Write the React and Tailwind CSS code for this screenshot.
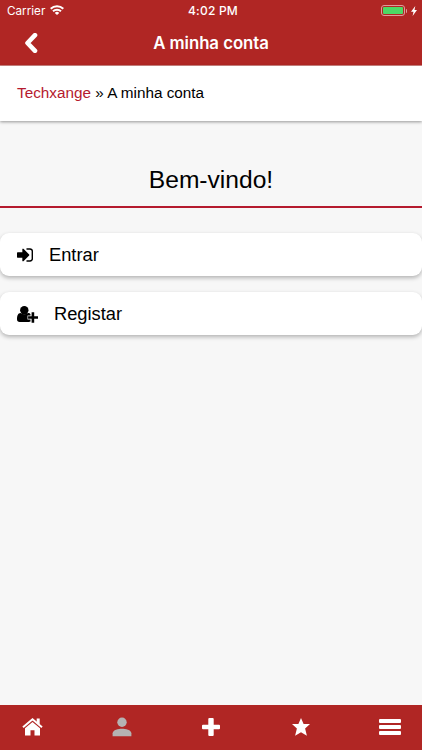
import React from 'react';

const SignInIcon = () => (
  <svg viewBox="0 0 1536 1536" className="w-[16px] h-[16px]" fill="currentColor">
    <path d="M1184 768q0 26-19 45l-544 544q-19 19-45 19t-45-19-19-45v-288H64q-26 0-45-19t-19-45V576q0-26 19-45t45-19h448V224q0-26 19-45t45-19 45 19l544 544q19 19 19 45z" />
    <path d="M960 192h288q92 0 158 62t66 162v704q0 92-62 158t-162 66H960" fill="none" stroke="currentColor" strokeWidth="140" strokeLinecap="round" />
  </svg>
);

const UserPlusIcon = () => (
  <svg viewBox="0 0 21 18" className="w-[21px] h-[18px]" fill="currentColor">
    <circle cx="7.300" cy="5.200" r="4.200" />
    <path d="M3.600 8c2.200 1.700 5.200 1.700 7.400 0 1.300 0 2 .5 2.500 1.200v1.400h-3v4h3v2c-.5.300-1 .4-1.700.4H2.700C1 17 0 15.900 0 14.200 0 11 .9 8 3.600 8z" />
    <path d="M14.600 7.200h2.600v4h3.800v2.600h-3.800v3.900h-2.600v-3.900h-3.500v-2.600h3.500z" />
  </svg>
);

const BackIcon = () => (
  <svg viewBox="0 0 14 20" className="w-[14px] h-[20px]" fill="none" stroke="currentColor" strokeWidth="4.600">
    <path d="M11 2.200L3.500 10l7.500 7.800" strokeLinejoin="round" strokeLinecap="round" />
  </svg>
);

const HomeIcon = () => (
  <svg viewBox="0 0 21 18" className="w-[21px] h-[18px]" fill="currentColor">
    <path d="M3 10.300L10.500 4 18 10.300v7.200h-5.500v-5.200h-4v5.200H3z" />
    <path d="M1 9.300l9.500-8L20 9.300" fill="none" stroke="currentColor" strokeWidth="2" />
    <path d="M14.700 0.500h3v6.500l-3-2.600z" />
  </svg>
);

const StatusBar = () => (
  <div className="grid grid-cols-3 items-center h-[22px] pl-[7px] pr-[5px] font-['Inter',sans-serif] text-[12px]">
    <div className="flex items-center gap-[5px]">
      <span className="text-[11.7px] pt-px">Carrier</span>
      <svg viewBox="0 0 14 10" className="w-[14px] h-[10px] -mt-px" fill="none" stroke="currentColor" strokeWidth="2">
        <path d="M0.7 3.700a9 9 0 0 1 12.600 0" />
        <path d="M3 6.300a5.700 5.700 0 0 1 8 0" />
        <path d="M4.800 7.900a3.200 3.200 0 0 1 4.400 0L7 10z" fill="currentColor" stroke="none" />
      </svg>
    </div>
    <span className="text-center font-medium tracking-[0.200px] pl-[2px]">4:02 PM</span>
    <div className="flex items-center justify-end -mt-px">
      <div className="w-[24px] h-[11px] rounded-[3px] border border-[#de9b9b] p-px">
        <div className="h-full rounded-[1px] bg-[#4cd964]"></div>
      </div>
      <div className="w-[1.5px] h-[4px] ml-px rounded-r bg-[#de9b9b]"></div>
      <svg viewBox="0 0 6 10" className="w-[6px] h-[10px] ml-[4px]" fill="currentColor">
        <path d="M4.300 0L0 5.800h2.500L1.600 10 6 4H3.500z" />
      </svg>
    </div>
  </div>
);

const Header = () => (
  <header className="h-[66px] shrink-0 bg-[#b02624] border-b border-[#cf8582] text-white">
    <StatusBar />
    <div className="grid grid-cols-[60px_1fr_60px] items-center h-[42px]">
      <button className="pl-[24px]">
        <BackIcon />
      </button>
      <h1 className="text-center text-[16.8px] leading-[20px] font-semibold tracking-[-0.04px] font-['Inter',sans-serif]">A minha conta</h1>
    </div>
  </header>
);

const MenuItem = ({ icon, label }) => (
  <button className="flex items-center gap-[16px] w-full h-[43px] pl-[17px] rounded-[9px] bg-white text-[18.3px] shadow-[0_2px_4px_rgba(0,0,0,0.28)]">
    {icon}
    <span className="pt-px">{label}</span>
  </button>
);

const TabBar = () => (
  <nav className="flex items-center justify-between h-[45px] shrink-0 bg-[#b02624] px-[21px] pb-px text-white">
    <button className="w-[22px] flex justify-center"><HomeIcon /></button>
    <button className="w-[22px] flex justify-center text-[#b5b2b2]">
      <svg viewBox="0 0 20 20" className="w-[20px] h-[20px]" fill="currentColor">
        <circle cx="10" cy="5.300" r="4.700" />
        <path d="M0.600 19.300v-3c0-3.500 6-4.600 9.400-4.600s9.400 1.100 9.400 4.600v3z" />
      </svg>
    </button>
    <button className="w-[22px] flex justify-center">
      <svg viewBox="0 0 18 18" className="w-[18px] h-[18px]" fill="currentColor">
        <path d="M7.300 0h3.400q1 0 1 1v5.700H17q1 0 1 1v2.600q0 1-1 1h-5.300V17q0 1-1 1H7.300q-1 0-1-1v-5.700H1q-1 0-1-1V7.700q0-1 1-1h5.300V1q0-1 1-1z" />
      </svg>
    </button>
    <button className="w-[22px] flex justify-center">
      <svg viewBox="0 0 18 18" className="w-[18px] h-[18px]" fill="currentColor">
        <path d="M9 0l2.600 6H18l-4.900 4.600 1.800 7.100L9 14.200l-5.900 3.500 1.800-7.100L0 6h6.400z" />
      </svg>
    </button>
    <button className="w-[22px] flex flex-col gap-[2px]">
      <span className="w-full h-[4px] rounded-[1px] bg-white"></span>
      <span className="w-full h-[4px] rounded-[1px] bg-white"></span>
      <span className="w-full h-[4px] rounded-[1px] bg-white"></span>
    </button>
  </nav>
);

const App = () => {
  return (
    <div className="flex flex-col w-full h-[750px] overflow-hidden bg-[#f7f7f7] text-black font-['Liberation_Sans',Arial,sans-serif]">
      <Header />

      <div className="flex items-center h-[55px] shrink-0 pl-[17px] bg-white text-[15.3px] shadow-[0_1px_3px_rgba(0,0,0,0.4)]">
        <p><a className="text-[#b51a2e]">Techxange</a> » A minha conta</p>
      </div>

      <main className="flex-1">
        <h2 className="h-[87px] pt-[43px] border-b-2 border-[#b51a2e] text-center text-[24.6px] leading-[32px]">Bem-vindo!</h2>
        <div className="flex flex-col gap-[16px] mt-[25px]">
          <MenuItem icon={<SignInIcon />} label="Entrar" />
          <MenuItem icon={<UserPlusIcon />} label="Registar" />
        </div>
      </main>

      <TabBar />
    </div>
  );
};

export default App;
